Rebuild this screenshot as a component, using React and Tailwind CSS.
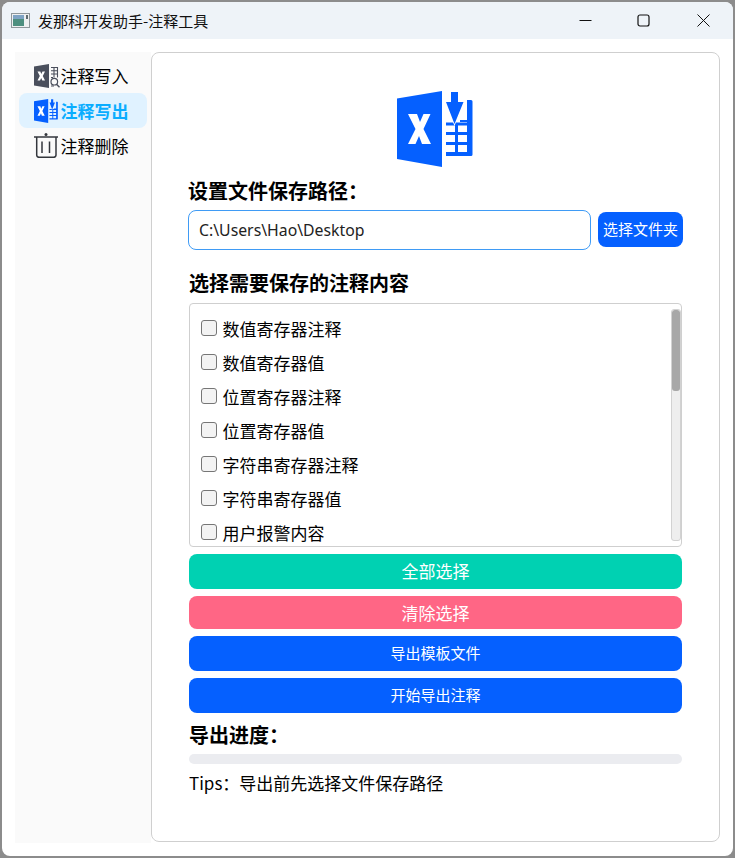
import React from "react";

function ExcelOut({ color = "#0560ff", className }) {
  return (
    <svg viewBox="0 0 76 76" className={className}>
      <polygon points="0,7.500 45,0 45,76 0,68" fill={color} />
      <polygon points="11,23 20,23 23,31 26.500,23 33.500,23 26.500,38 34,53 25,53 22,45 18.500,53 11,53 18.500,38" fill="#fff" />
      <path d="M70 9h4a1.500 1.500 0 0 1 1.500 1.500V63.500A1.500 1.500 0 0 1 74 65H49V61H70V54H49V51H70V44H49V41H70V34.500H49V31.500H70V31H63V29H70ZM58 33h3v29h-3Z" fill={color} />
      <polygon points="54,1 61,1 61,11 66.500,11 57.500,33 49,11 54,11" fill={color} stroke="#fff" strokeWidth="1.500" paintOrder="stroke" />
    </svg>
  );
}

function ExcelIn({ className }) {
  const c = "#4a4f5c";
  return (
    <svg viewBox="0 0 24 24" className={`overflow-visible ${className}`}>
      <polygon points="0,2.500 15,0 15,24 0,21.500" fill={c} />
      <polygon points="3.500,7.500 6.300,7.500 7.300,10 8.500,7.500 11,7.500 8.800,12 11,16.500 8.300,16.500 7.200,14 6,16.500 3.500,16.500 5.800,12" fill="#fff" />
      <path d="M17 3.500h6.500v10M17 6.700h6.500M17 10h6.500M17 13.500h2M20 3.500v10" stroke={c} strokeWidth="1.100" fill="none" />
      <circle cx="20.300" cy="17.700" r="3.300" stroke={c} strokeWidth="1.200" fill="none" />
      <path d="M22.500 20.200L25.500 23.200" stroke={c} strokeWidth="1.400" />
      <path d="M17 22h3" stroke={c} strokeWidth="1.100" />
    </svg>
  );
}

function Trash({ className }) {
  const c = "#33363c";
  return (
    <svg viewBox="0 0 24 25" className={className} fill="none" stroke={c} strokeWidth="1.500">
      <path d="M0 4h24" />
      <circle cx="12" cy="1.500" r="1.500" fill={c} stroke="none" />
      <path d="M2.700 4v18a2.300 2.300 0 0 0 2.300 2.300h14.700a2.300 2.300 0 0 0 2.300-2.300V4" />
      <path d="M8 8.500V20M15.500 8.500V20" />
    </svg>
  );
}

function AppIcon() {
  return (
    <svg viewBox="0 0 19 15" className="h-[15px] w-[19px] shrink-0">
      <rect x="0.500" y="0.500" width="18" height="14" fill="#eef0f1" stroke="#8f979b" />
      <rect x="2" y="2" width="11" height="11" fill="#4d8f7f" />
      <rect x="2" y="2" width="11" height="4" fill="#7ea3c4" />
      <rect x="15" y="2" width="2" height="4" fill="#5f6b70" />
    </svg>
  );
}

function NavItem({ icon, label, active }) {
  return (
    <div className={`flex h-[35px] items-center rounded-lg pl-[15px] ${active ? "bg-[#e0f2ff] text-[#0aadff] font-bold" : "text-black"}`}>
      <span className="flex w-[24px] shrink-0 justify-center">{icon}</span>
      <span className="ml-[2.500px] text-[17px] leading-none">{label}</span>
    </div>
  );
}

function Check({ label }) {
  return (
    <label className="flex h-[34px] shrink-0 items-center pl-[11px]">
      <input type="checkbox" className="h-4 w-4 shrink-0 appearance-none rounded-[3px] border border-[#767676] bg-[#f3f3f3]" />
      <span className="ml-[5.500px] text-[17px] leading-none text-black">{label}</span>
    </label>
  );
}

function Btn({ color, size, h, extra = "", children }) {
  return (
    <button className={`flex w-full items-center justify-center rounded-lg text-white ${color} ${size} ${h} ${extra}`}>
      {children}
    </button>
  );
}

export default function App() {
  const items = ["数值寄存器注释", "数值寄存器值", "位置寄存器注释", "位置寄存器值", "字符串寄存器注释", "字符串寄存器值", "用户报警内容"];
  return (
    <div className="h-[858px] w-[735px] overflow-hidden bg-[#8c8c8c] p-[2px] font-['Noto_Sans_CJK_SC','Noto_Sans',sans-serif]">
      <div className="flex h-[854px] w-[731px] flex-col overflow-hidden rounded-lg bg-white">
        <div className="flex h-[37px] shrink-0 items-center bg-[#eef3f8] pl-[9px]">
          <AppIcon />
          <span className="ml-[8px] text-[15px] leading-none text-[#111]">发那科开发助手-注释工具</span>
          <div className="ml-auto flex h-full items-center">
            <div className="flex w-[59px] justify-center">
              <svg width="13" height="13" viewBox="0 0 13 13"><path d="M0.500 6.500h12" stroke="#111" strokeWidth="1" /></svg>
            </div>
            <div className="flex w-[59px] justify-center pr-[2px]">
              <svg width="13" height="13" viewBox="0 0 13 13"><rect x="1" y="1" width="11" height="11" rx="2" fill="none" stroke="#111" strokeWidth="1.200" /></svg>
            </div>
            <div className="flex w-[59px] justify-center">
              <svg width="13" height="13" viewBox="0 0 13 13"><path d="M0.500 0.500l12 12M12.500 0.500l-12 12" stroke="#111" strokeWidth="1" /></svg>
            </div>
          </div>
        </div>
        <div className="flex flex-1 p-[13px]">
          <aside className="flex h-[791px] w-[136px] shrink-0 flex-col bg-[#fafafa] px-[4px] pt-[6px]">
            <NavItem icon={<ExcelIn className="h-6 w-6" />} label="注释写入" />
            <NavItem active icon={<ExcelOut className="h-6 w-6" />} label="注释写出" />
            <NavItem icon={<Trash className="h-[25px] w-6" />} label="注释删除" />
          </aside>
          <main className="flex h-[790px] w-[569px] flex-col rounded-lg border border-[#cfcfcf] bg-white px-[36px] pt-[38px]">
            <div className="flex justify-center pr-[1px]">
              <ExcelOut className="h-[76px] w-[76px]" />
            </div>
            <h2 className="mt-[10px] h-[28px] text-[20px] font-bold leading-[28px] text-black">设置文件保存路径：</h2>
            <div className="mt-[5px] flex items-start">
              <input readOnly value="C:\Users\Hao\Desktop" className="h-[40px] w-[403px] rounded-lg border border-[#3f9bf5] pl-[10px] font-['Noto_Sans','Noto_Sans_CJK_SC',sans-serif] text-[15.800px] text-[#222] outline-none" />
              <button className="ml-[7px] mt-[2px] flex h-[35px] w-[85px] items-center justify-center rounded-lg bg-[#0560ff] text-[15px] text-white">选择文件夹</button>
            </div>
            <div className="pl-[1px]">
              <h2 className="mt-[19px] h-[28px] text-[20px] font-bold leading-[28px] text-black">选择需要保存的注释内容</h2>
              <div className="mt-[6px] flex h-[244px] w-[493px] overflow-hidden rounded-sm border border-[#cfcfcf]">
                <div className="flex min-w-0 flex-1 flex-col overflow-hidden pt-[7px]">
                  {items.map((t) => <Check key={t} label={t} />)}
                </div>
                <div className="mt-[5px] h-[232px] w-[10px] shrink-0 overflow-hidden rounded-[3px] border border-[#d2d2d2] bg-[#eeeeee]">
                  <div className="h-[81px] w-full rounded-[3px] bg-[#a8a8a8]"></div>
                </div>
              </div>
              <div className="mt-[7px] flex w-[493px] flex-col">
                <Btn color="bg-[#00d1b2]" size="text-[17px]" h="h-[35px]" extra="pb-[1px]">全部选择</Btn>
                <div className="mt-[7px]"><Btn color="bg-[#ff6685]" size="text-[17px]" h="h-[33px]">清除选择</Btn></div>
                <div className="mt-[7px]"><Btn color="bg-[#0560ff]" size="text-[15px]" h="h-[35px]">导出模板文件</Btn></div>
                <div className="mt-[7px]"><Btn color="bg-[#0560ff]" size="text-[15px]" h="h-[35px]">开始导出注释</Btn></div>
              </div>
              <h2 className="mt-[8px] h-[28px] text-[20px] font-bold leading-[28px] text-black">导出进度：</h2>
              <div className="mt-[5px] h-[10px] w-[493px] rounded-full bg-[#ebecf0]"></div>
              <p className="mt-[7px] text-[17px] leading-[24px] text-black">Tips：导出前先选择文件保存路径</p>
            </div>
          </main>
        </div>
      </div>
    </div>
  );
}
